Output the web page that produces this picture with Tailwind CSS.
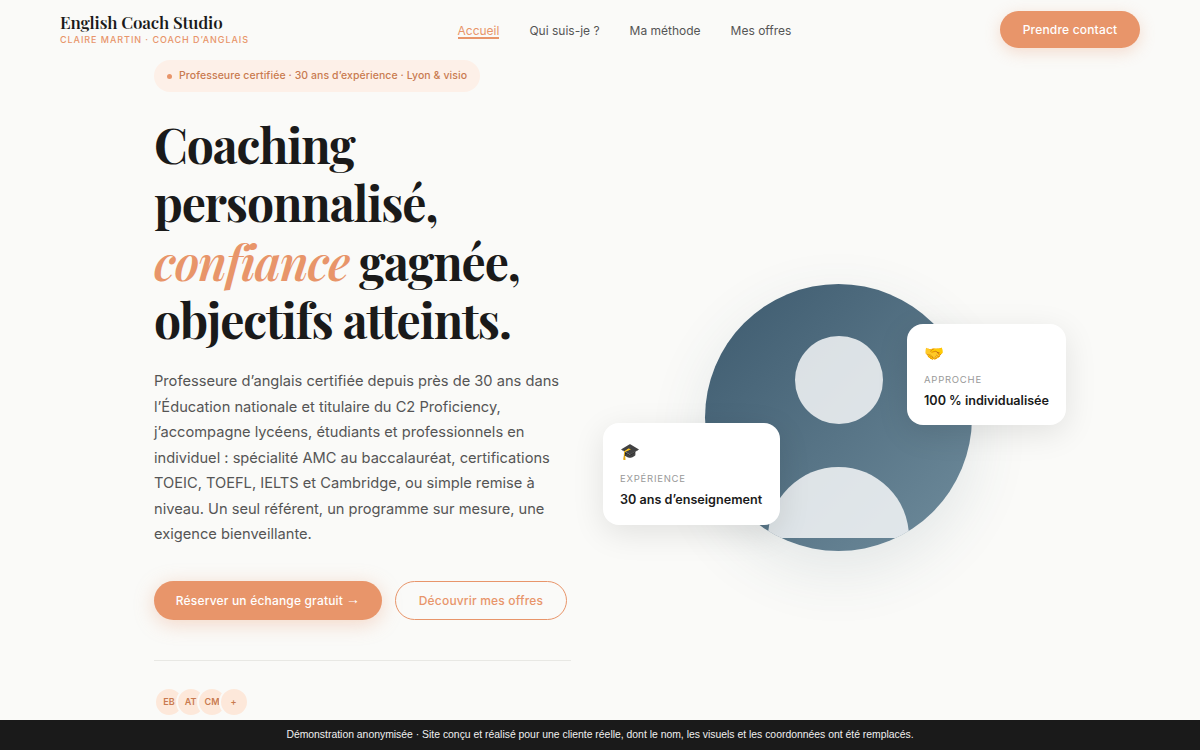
<!DOCTYPE html>
<html lang="fr">
<head>
<meta charset="utf-8">
<title>English Coach Studio</title>
<script src="https://cdn.jsdelivr.net/npm/@tailwindcss/browser@4"></script>
</head>
<body class="bg-[#fafaf8] font-['Inter',sans-serif] text-[#1a1a1a] overflow-hidden h-[750px] relative">
<header class="h-[60px] px-[60px] flex items-center justify-between">
  <div class="pb-[4px]">
    <div class="mb-px font-['Playfair_Display','Liberation_Serif',serif] font-semibold text-[17px] tracking-[-0.01em] leading-[22px] text-[#1a1a1a]">English Coach Studio</div>
    <div class="text-[9px] leading-[12px] tracking-[0.105em] uppercase text-[#e8956a] font-medium">Claire Martin · Coach d’anglais</div>
  </div>
  <nav class="flex items-center gap-[30px] pt-px text-[12px] leading-[18px] text-[#555555]">
    <a class="relative text-[#e8956a]">Accueil<span class="absolute left-0 right-0 bottom-px h-[1.5px] bg-[#e8956a]"></span></a>
    <a>Qui suis-je ?</a>
    <a>Ma méthode</a>
    <a>Mes offres</a>
  </nav>
  <a class="h-[37px] w-[140px] -mt-px pt-px rounded-full bg-[#e8956a] text-white text-[12px] tracking-[0.015em] font-medium flex items-center justify-center shadow-[0_4px_16px_rgba(232,149,106,0.3)]">Prendre contact</a>
</header>
<main class="flex pl-[154px]">
  <section class="w-[417px] shrink-0">
    <div class="inline-flex items-center gap-[7px] h-[32px] px-[13px] rounded-full bg-[#fdf0e8] text-[10.5px] tracking-[0.007em] font-medium text-[#c97b50]">
      <span class="w-[5px] h-[5px] rounded-full bg-[#e8956a]"></span>
      Professeure certifiée · 30 ans d’expérience · Lyon &amp; visio
    </div>
    <h1 class="mt-[23px] font-['Playfair_Display','Liberation_Serif',serif] font-bold text-[48px] leading-[58.3px] tracking-[-0.023em] text-[#1a1a1a]">Coaching personnalisé, <em class="font-semibold text-[#e8956a]">confiance</em> gagnée, objectifs atteints.</h1>
    <p class="mt-[21px] text-[14.65px] leading-[25.5px] text-[#555555]">Professeure d’anglais certifiée depuis près de 30 ans dans l’Éducation nationale et titulaire du C2 Proficiency, j’accompagne lycéens, étudiants et professionnels en individuel : spécialité AMC au baccalauréat, certifications TOEIC, TOEFL, IELTS et Cambridge, ou simple remise à niveau. Un seul référent, un programme sur mesure, une exigence bienveillante.</p>
    <div class="mt-[33px] flex items-center gap-[13px]">
      <a class="h-[39px] w-[228px] pt-px rounded-full bg-[#e8956a] text-white text-[12px] tracking-[0.015em] font-medium flex items-center justify-center gap-[3px] shadow-[0_4px_20px_rgba(232,149,106,0.35)]">Réserver un échange gratuit <span class="font-['Liberation_Sans',sans-serif] text-[14px] leading-none -mt-[4px]">→</span></a>
      <a class="h-[39px] w-[172px] pt-px rounded-full border border-[#e8956a] text-[#e8956a] text-[12px] tracking-[0.015em] font-medium flex items-center justify-center">Découvrir mes offres</a>
    </div>
    <div class="mt-[40px] border-t border-[#e8e8e4] pt-[26px] flex">
      <span class="w-[30px] h-[30px] rounded-full border-2 border-[#fafaf8] bg-[#fde8da] text-[9px] font-semibold text-[#c97b50] flex items-center justify-center">EB</span>
      <span class="-ml-[8.5px] w-[30px] h-[30px] rounded-full border-2 border-[#fafaf8] bg-[#fde8da] text-[9px] font-semibold text-[#c97b50] flex items-center justify-center">AT</span>
      <span class="-ml-[8.5px] w-[30px] h-[30px] rounded-full border-2 border-[#fafaf8] bg-[#fde8da] text-[9px] font-semibold text-[#c97b50] flex items-center justify-center">CM</span>
      <span class="-ml-[8.5px] w-[30px] h-[30px] rounded-full border-2 border-[#fafaf8] bg-[#fde8da] text-[9px] font-semibold text-[#c97b50] flex items-center justify-center">+</span>
    </div>
  </section>
  <section class="relative ml-[32px] w-[463px] h-[600px]">
    <div class="absolute left-[102px] top-[224px] w-[267px] h-[267px] rounded-full overflow-hidden bg-linear-to-br from-[#3d5a6e] to-[#6f8c9c] shadow-[0_20px_60px_rgba(61,90,110,0.12)]"></div>
    <div class="absolute left-[102px] top-[224px] w-[267px] h-[267px] rounded-full overflow-hidden">
      <div class="absolute left-[90px] top-[52px] w-[88px] h-[88px] rounded-full bg-white/80"></div>
      <div class="absolute left-[63px] top-[183px] w-[141px] h-[71px] rounded-t-full bg-white/80"></div>
    </div>
    <div class="absolute left-[304px] top-[264px] w-[159px] h-[101px] rounded-2xl bg-white px-[17px] pt-[18px] shadow-[0_8px_32px_rgba(0,0,0,0.1)] whitespace-nowrap">
      <div class="text-[16px] leading-[24px] font-['Noto_Color_Emoji',sans-serif]">🤝</div>
      <div class="mt-[8px] text-[9.5px] leading-[12px] tracking-[0.08em] uppercase text-[#999999]">Approche</div>
      <div class="mt-[7px] text-[12.6px] leading-[16px] font-semibold text-[#1a1a1a]">100 % individualisée</div>
    </div>
    <div class="absolute left-0 top-[363px] w-[177px] h-[102px] rounded-2xl bg-white px-[17px] pt-[17px] shadow-[0_8px_32px_rgba(0,0,0,0.1)] whitespace-nowrap">
      <div class="text-[16px] leading-[24px] font-['Noto_Color_Emoji',sans-serif]">🎓</div>
      <div class="mt-[9px] text-[9.5px] leading-[12px] tracking-[0.08em] uppercase text-[#999999]">Expérience</div>
      <div class="mt-[7px] text-[12.6px] leading-[16px] font-semibold text-[#1a1a1a]">30 ans d’enseignement</div>
    </div>
  </section>
</main>
<footer class="absolute left-0 right-0 bottom-0 h-[30px] bg-[#1a1a1a] text-[#f0f0f0] text-[10.4px] font-['Liberation_Sans',sans-serif] flex items-center justify-center">Démonstration anonymisée · Site conçu et réalisé pour une cliente réelle, dont le nom, les visuels et les coordonnées ont été remplacés.</footer>
</body>
</html>
